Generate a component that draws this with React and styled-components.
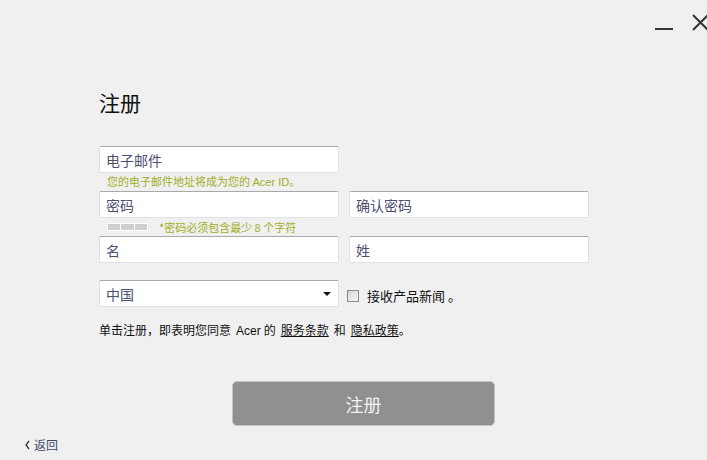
import React from 'react';
import styled, { createGlobalStyle } from 'styled-components';

const GlobalStyle = createGlobalStyle`
  html, body {
    margin: 0;
    padding: 0;
    background: #f0f0f0;
  }
  body {
    font-family: "Noto Sans CJK SC", "Liberation Sans", sans-serif;
  }
`;

const Page = styled.div`
  width: 707px;
  height: 460px;
  background: #f0f0f0;
  display: flex;
  flex-direction: column;
  overflow: hidden;
`;

const TitleBar = styled.div`
  height: 40px;
  display: flex;
  justify-content: flex-end;
  align-items: flex-start;
  padding-top: 12px;
  gap: 14px;
  margin-right: -4px;
`;

const WinButton = styled.div`
  width: 22px;
  height: 22px;
  display: flex;
  align-items: center;
  justify-content: center;
`;

const Form = styled.div`
  padding-left: 99px;
  display: flex;
  flex-direction: column;
`;

const Title = styled.h1`
  margin: 36px 0 0 0;
  font-size: 21px;
  font-weight: 400;
  line-height: 28px;
  color: #111;
`;

const Row = styled.div`
  display: flex;
  gap: 10px;
  align-items: center;
  margin-top: ${(p) => p.$top || 0}px;
`;

const Field = styled.div`
  width: 240px;
  height: 27px;
  box-sizing: border-box;
  background: #fff;
  border: 1px solid #dfe1e8;
  border-top-color: #a9a9a9;
  border-radius: 2px;
  display: flex;
  align-items: center;
  padding-left: 6px;
  font-size: 14px;
  color: #4d4f70;
  position: relative;
`;

const Hint = styled.div`
  font-size: 11px;
  line-height: 17px;
  color: #a0ae1e;
  padding-left: ${(p) => p.$indent ?? 8}px;
`;

const HintRow = styled.div`
  display: flex;
  align-items: center;
  height: 18px;
  padding-left: 8px;
  gap: 11px;
`;

const Strength = styled.div`
  display: flex;
  width: 39px;
  height: 6px;
  border: 1px solid #fff;
  background: #fff;
  gap: 1px;
`;

const Seg = styled.div`
  flex: 1;
  background: #cfcfcf;
`;

const Arrow = styled.span`
  position: absolute;
  right: 7px;
  top: 11px;
  width: 0;
  height: 0;
  border-left: 4px solid transparent;
  border-right: 4px solid transparent;
  border-top: 4px solid #111;
`;

const Check = styled.label`
  display: flex;
  align-items: center;
  gap: 8px;
  font-size: 13px;
  color: #111;
  margin-left: -2px;
  padding-top: 4px;
`;

const Box = styled.span`
  width: 10px;
  height: 10px;
  border: 1px solid #8a8a8a;
  background: linear-gradient(135deg, #d6d6d6, #f6f6f6);
`;

const Terms = styled.div`
  margin-top: 13px;
  font-size: 12px;
  line-height: 20px;
  color: #111;
`;

const Latin = styled.span`
  font-family: "Liberation Sans", sans-serif;
  font-size: 12px;
  margin: 0 3px 0 5px;
`;

const Link = styled.a`
  color: #111;
  text-decoration: underline;
  margin: 0 ${(p) => (p.$last ? 0 : 5)}px 0 5px;
`;

const ButtonWrap = styled.div`
  display: flex;
  justify-content: center;
  margin-top: 40px;
`;

const Submit = styled.button`
  width: 263px;
  height: 45px;
  margin-left: 20px;
  background: #909090;
  border: 1px solid #c4c4c4;
  border-radius: 5px;
  color: #f2f2f2;
  font-family: "Noto Sans CJK SC", sans-serif;
  font-size: 18px;
`;

const Back = styled.div`
  margin-top: 10px;
  padding-left: 24px;
  display: flex;
  align-items: center;
  gap: 2px;
  font-size: 12px;
  color: #3a4a6a;
`;

export default function App() {
  return (
    <Page>
      <GlobalStyle />
      <TitleBar>
        <WinButton>
          <svg width="20" height="20" viewBox="0 0 20 20">
            <rect x="1" y="15" width="18" height="2" fill="#333" />
          </svg>
        </WinButton>
        <WinButton>
          <svg width="20" height="20" viewBox="0 0 20 20">
            <path d="M3 2 L18 17 M18 2 L3 17" stroke="#333" strokeWidth="2" />
          </svg>
        </WinButton>
      </TitleBar>
      <Form>
        <Title>注册</Title>
        <Row $top={30}>
          <Field>电子邮件</Field>
        </Row>
        <Hint>
          您的电子邮件地址将成为您的 <span style={{ fontFamily: 'Liberation Sans', fontSize: 11 }}>Acer ID</span>。
        </Hint>
        <Row>
          <Field>密码</Field>
          <Field>确认密码</Field>
        </Row>
        <HintRow>
          <Strength>
            <Seg />
            <Seg />
            <Seg />
          </Strength>
          <Hint $indent={0}>*密码必须包含最少 8 个字符</Hint>
        </HintRow>
        <Row>
          <Field>名</Field>
          <Field>姓</Field>
        </Row>
        <Row $top={17}>
          <Field>
            中国
            <Arrow />
          </Field>
          <Check>
            <Box />
            接收产品新闻 。
          </Check>
        </Row>
        <Terms>
          单击注册，即表明您同意<Latin>Acer</Latin>的<Link>服务条款</Link>和<Link $last>隐私政策</Link>。
        </Terms>
      </Form>
      <ButtonWrap>
        <Submit>注册</Submit>
      </ButtonWrap>
      <Back>
        <svg width="8" height="10" viewBox="0 0 8 10">
          <path d="M5 1 L2 5 L5 9" stroke="#333" strokeWidth="1.3" fill="none" />
        </svg>
        返回
      </Back>
    </Page>
  );
}
